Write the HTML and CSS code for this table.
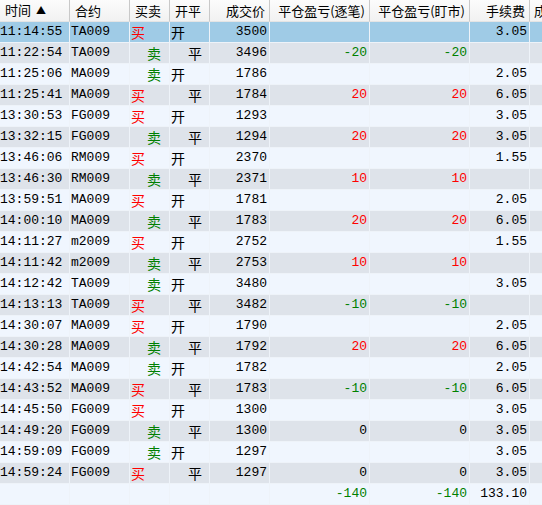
FILE: index.html
```html
<!DOCTYPE html>
<html lang="zh-CN">
<head>
<meta charset="utf-8">
<title>成交记录</title>
<link rel="stylesheet" href="styles.css">
</head>
<body>
<table class="grid">
  <colgroup>
    <col class="c-time"><col class="c-code"><col class="c-bs"><col class="c-oc"><col class="c-price"><col class="c-pl"><col class="c-pl"><col class="c-fee"><col class="c-rest">
  </colgroup>
  <thead>
    <tr>
      <th class="h-left">时间 <span class="sort">▲</span></th>
      <th class="h-left">合约</th>
      <th class="h-left">买卖</th>
      <th class="h-left">开平</th>
      <th class="h-right">成交价</th>
      <th class="h-right">平仓盈亏(逐笔)</th>
      <th class="h-right">平仓盈亏(盯市)</th>
      <th class="h-right">手续费</th>
      <th class="h-left h-cut">成</th>
    </tr>
  </thead>
  <tbody>
    <tr class="sel"><td class="t">11:14:55</td><td class="k">TA009</td><td class="cn buy">买</td><td class="cn">开</td><td class="n">3500</td><td class="n"></td><td class="n"></td><td class="n">3.05</td><td></td></tr>
    <tr class="alt"><td class="t">11:22:54</td><td class="k">TA009</td><td class="cn sell">卖</td><td class="cn close">平</td><td class="n">3496</td><td class="n neg">-20</td><td class="n neg">-20</td><td class="n"></td><td></td></tr>
    <tr><td class="t">11:25:06</td><td class="k">MA009</td><td class="cn sell">卖</td><td class="cn">开</td><td class="n">1786</td><td class="n"></td><td class="n"></td><td class="n">2.05</td><td></td></tr>
    <tr class="alt"><td class="t">11:25:41</td><td class="k">MA009</td><td class="cn buy">买</td><td class="cn close">平</td><td class="n">1784</td><td class="n pos">20</td><td class="n pos">20</td><td class="n">6.05</td><td></td></tr>
    <tr><td class="t">13:30:53</td><td class="k">FG009</td><td class="cn buy">买</td><td class="cn">开</td><td class="n">1293</td><td class="n"></td><td class="n"></td><td class="n">3.05</td><td></td></tr>
    <tr class="alt"><td class="t">13:32:15</td><td class="k">FG009</td><td class="cn sell">卖</td><td class="cn close">平</td><td class="n">1294</td><td class="n pos">20</td><td class="n pos">20</td><td class="n">3.05</td><td></td></tr>
    <tr><td class="t">13:46:06</td><td class="k">RM009</td><td class="cn buy">买</td><td class="cn">开</td><td class="n">2370</td><td class="n"></td><td class="n"></td><td class="n">1.55</td><td></td></tr>
    <tr class="alt"><td class="t">13:46:30</td><td class="k">RM009</td><td class="cn sell">卖</td><td class="cn close">平</td><td class="n">2371</td><td class="n pos">10</td><td class="n pos">10</td><td class="n"></td><td></td></tr>
    <tr><td class="t">13:59:51</td><td class="k">MA009</td><td class="cn buy">买</td><td class="cn">开</td><td class="n">1781</td><td class="n"></td><td class="n"></td><td class="n">2.05</td><td></td></tr>
    <tr class="alt"><td class="t">14:00:10</td><td class="k">MA009</td><td class="cn sell">卖</td><td class="cn close">平</td><td class="n">1783</td><td class="n pos">20</td><td class="n pos">20</td><td class="n">6.05</td><td></td></tr>
    <tr><td class="t">14:11:27</td><td class="k">m2009</td><td class="cn buy">买</td><td class="cn">开</td><td class="n">2752</td><td class="n"></td><td class="n"></td><td class="n">1.55</td><td></td></tr>
    <tr class="alt"><td class="t">14:11:42</td><td class="k">m2009</td><td class="cn sell">卖</td><td class="cn close">平</td><td class="n">2753</td><td class="n pos">10</td><td class="n pos">10</td><td class="n"></td><td></td></tr>
    <tr><td class="t">14:12:42</td><td class="k">TA009</td><td class="cn sell">卖</td><td class="cn">开</td><td class="n">3480</td><td class="n"></td><td class="n"></td><td class="n">3.05</td><td></td></tr>
    <tr class="alt"><td class="t">14:13:13</td><td class="k">TA009</td><td class="cn buy">买</td><td class="cn close">平</td><td class="n">3482</td><td class="n neg">-10</td><td class="n neg">-10</td><td class="n"></td><td></td></tr>
    <tr><td class="t">14:30:07</td><td class="k">MA009</td><td class="cn buy">买</td><td class="cn">开</td><td class="n">1790</td><td class="n"></td><td class="n"></td><td class="n">2.05</td><td></td></tr>
    <tr class="alt"><td class="t">14:30:28</td><td class="k">MA009</td><td class="cn sell">卖</td><td class="cn close">平</td><td class="n">1792</td><td class="n pos">20</td><td class="n pos">20</td><td class="n">6.05</td><td></td></tr>
    <tr><td class="t">14:42:54</td><td class="k">MA009</td><td class="cn sell">卖</td><td class="cn">开</td><td class="n">1782</td><td class="n"></td><td class="n"></td><td class="n">2.05</td><td></td></tr>
    <tr class="alt"><td class="t">14:43:52</td><td class="k">MA009</td><td class="cn buy">买</td><td class="cn close">平</td><td class="n">1783</td><td class="n neg">-10</td><td class="n neg">-10</td><td class="n">6.05</td><td></td></tr>
    <tr><td class="t">14:45:50</td><td class="k">FG009</td><td class="cn buy">买</td><td class="cn">开</td><td class="n">1300</td><td class="n"></td><td class="n"></td><td class="n">3.05</td><td></td></tr>
    <tr class="alt"><td class="t">14:49:20</td><td class="k">FG009</td><td class="cn sell">卖</td><td class="cn close">平</td><td class="n">1300</td><td class="n">0</td><td class="n">0</td><td class="n">3.05</td><td></td></tr>
    <tr><td class="t">14:59:09</td><td class="k">FG009</td><td class="cn sell">卖</td><td class="cn">开</td><td class="n">1297</td><td class="n"></td><td class="n"></td><td class="n">3.05</td><td></td></tr>
    <tr class="alt"><td class="t">14:59:24</td><td class="k">FG009</td><td class="cn buy">买</td><td class="cn close">平</td><td class="n">1297</td><td class="n">0</td><td class="n">0</td><td class="n">3.05</td><td></td></tr>
    <tr class="total"><td class="t"></td><td class="k"></td><td></td><td></td><td class="n"></td><td class="n neg">-140</td><td class="n neg">-140</td><td class="n">133.10</td><td></td></tr>
  </tbody>
</table>
</body>
</html>
```

FILE: styles.css
```css
html, body {
  margin: 0;
  padding: 0;
  background: #f0f6fe;
}

.grid {
  border-collapse: separate;
  border-spacing: 0;
  table-layout: fixed;
  width: 560px;
  font-family: "Liberation Mono", "Noto Sans CJK SC", monospace;
  font-size: 13px;
  color: #000;
}

.c-time { width: 70px; }
.c-code { width: 60px; }
.c-bs { width: 40px; }
.c-oc { width: 40px; }
.c-price { width: 60px; }
.c-pl { width: 100px; }
.c-fee { width: 60px; }
.c-rest { width: 30px; }

th {
  height: 20px;
  padding: 0;
  font-family: "Noto Sans CJK SC", sans-serif;
  font-weight: normal;
  font-size: 13px;
  line-height: 20px;
  white-space: nowrap;
  overflow: hidden;
  background: linear-gradient(#fcfcfc, #f1f1f1);
  border-right: 1px solid #c9c9c9;
  border-bottom: 1px solid #e4e4e4;
}

.h-left { text-align: left; padding-left: 5px; }
.h-right { text-align: right; padding-right: 4px; }
.h-cut { padding-left: 4px; border-right: none; }

.sort {
  font-size: 10px;
  margin-left: 2px;
  position: relative;
  top: -1px;
}

td {
  height: 20px;
  padding: 0;
  line-height: 20px;
  white-space: nowrap;
  overflow: hidden;
  border-right: 1px solid #eef3f9;
  border-bottom: 1px solid #eef3f9;
  background: #f0f6fe;
}

tr.alt td { background: #dee3ea; }
tr.sel td { background: #9fcbe6; }

.t { padding-left: 0; }
.k { padding-left: 1px; }
.n { text-align: right; padding-right: 2px; }

.cn {
  font-family: "Noto Sans CJK SC", sans-serif;
  font-size: 14px;
  padding-left: 1px;
}

.sell { padding-left: 17px; }
.close { padding-left: 18px; }

.buy { color: #ff0000; }
.sell { color: #008000; }
.pos { color: #ff0000; }
.neg { color: #008000; }
```
